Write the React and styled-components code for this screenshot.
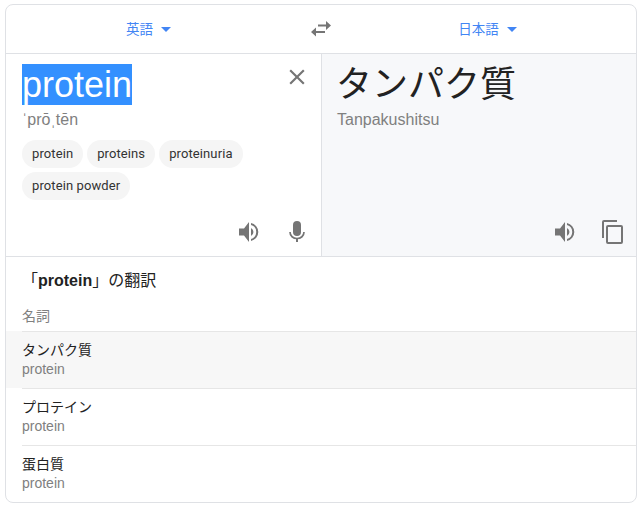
import React from 'react';
import styled, { createGlobalStyle } from 'styled-components';

const GlobalStyle = createGlobalStyle`
  html, body {
    margin: 0;
    padding: 0;
    background: #fff;
    font-family: "Liberation Sans", "Noto Sans CJK JP", sans-serif;
  }
`;

const Card = styled.div`
  box-sizing: border-box;
  width: 632px;
  height: 499px;
  margin: 4px 0 0 5px;
  border: 1px solid #dfe1e5;
  border-radius: 8px;
  overflow: hidden;
  color: #222;
`;

const Toolbar = styled.div`
  display: grid;
  grid-template-columns: 285px 60px 273px;
  align-items: center;
  height: 48px;
  border-bottom: 1px solid #dfe1e5;
`;

const LangButton = styled.div`
  display: flex;
  align-items: center;
  justify-content: center;
  gap: 8px;
  padding-bottom: 2px;
  font-size: 13.5px;
  color: #4285f4;
`;

const Caret = styled.span`
  width: 0;
  height: 0;
  margin-top: 3px;
  border-left: 5px solid transparent;
  border-right: 5px solid transparent;
  border-top: 5px solid #4285f4;
`;

const SwapButton = styled.div`
  display: flex;
  justify-content: center;
  color: #757575;
`;

const Panels = styled.div`
  display: grid;
  grid-template-columns: 315px 1fr;
  height: 202px;
  border-bottom: 1px solid #dfe1e5;
`;

const Panel = styled.div`
  position: relative;
  display: flex;
  flex-direction: column;
  padding: 10px 16px 0 ${props => props.$shaded ? '15px' : '16px'};
  background: ${props => props.$shaded ? '#f7f8fa' : '#fff'};
  border-left: ${props => props.$shaded ? '1px solid #dfe1e5' : 'none'};
`;

const BigText = styled.div`
  font-size: 36px;
  line-height: 42px;
  margin-left: ${props => props.$nudge ? '-1px' : '0'};
`;

const Selected = styled.span`
  background: #3390ff;
  color: #fff;
`;

const Reading = styled.div`
  margin-top: 2px;
  font-size: 16px;
  line-height: 24px;
  color: #808080;
`;

const Chips = styled.div`
  display: flex;
  flex-wrap: wrap;
  gap: 4px;
  margin-top: 8px;
  width: 240px;
`;

const Chip = styled.span`
  height: 28px;
  padding: 0 10px;
  border-radius: 14px;
  background: #f5f5f5;
  font-family: Roboto, "Liberation Sans", sans-serif;
  font-size: 13px;
  line-height: 28px;
  letter-spacing: 0.1px;
  color: #333;
`;

const CloseButton = styled.div`
  position: absolute;
  top: 10px;
  right: 11px;
  display: flex;
  color: #757575;
`;

const Actions = styled.div`
  display: flex;
  justify-content: flex-end;
  gap: 24px;
  margin-top: auto;
  margin-right: ${props => props.$offset}px;
  padding-bottom: 12px;
  color: #757575;
`;

const Results = styled.div`
  display: flex;
  flex-direction: column;
`;

const ResultTitle = styled.div`
  padding: 15px 16px 0;
  font-size: 16px;
  line-height: 18px;
  color: #222;
`;

const PartOfSpeech = styled.div`
  padding: 16px 16px 0;
  font-size: 14px;
  line-height: 20px;
  height: 25px;
  color: #808080;
`;

const Row = styled.div`
  background: ${props => props.$active ? '#f7f7f7' : 'transparent'};
  height: 57px;
  box-sizing: border-box;
`;

const RowInner = styled.div`
  margin-left: 16px;
  padding-top: 8px;
  border-top: 1px solid #e6e6e6;
  height: 100%;
  box-sizing: border-box;
`;

const RowMain = styled.div`
  font-size: 14px;
  line-height: 20px;
  color: #222;
`;

const RowSub = styled.div`
  margin-top: -1px;
  font-size: 14px;
  line-height: 20px;
  color: #808080;
`;

const Svg = styled.svg`
  display: block;
  overflow: visible;
  fill: currentColor;
`;

const SpeakerIcon = () => (
  <Svg width="24" height="24" viewBox="0 0 24 24">
    <path d="M2 8.5h5L12 2v20l-5-6.5H2z" />
    <path d="M14 8a4.5 4.5 0 0 1 0 8z" />
    <path d="M14 3a9.2 9.2 0 0 1 0 18v-2a7.3 7.3 0 0 0 0-14z" />
  </Svg>
);

const MicIcon = () => (
  <Svg width="24" height="24" viewBox="0 0 24 24">
    <path d="M12 16a4 4 0 0 0 4-4V5a4 4 0 0 0-8 0v7a4 4 0 0 0 4 4z" />
    <path d="M5 12c0 4 3.2 6.5 7 6.5s7-2.5 7-6.5" fill="none" stroke="currentColor" strokeWidth="1.7" />
    <path d="M11 18h2v4h-2z" />
  </Svg>
);

const CopyIcon = () => (
  <Svg width="24" height="24" viewBox="0 0 24 24">
    <path d="M3 0h13v2H3v16H1V2a2 2 0 0 1 2-2z" />
    <rect x="6" y="6" width="15" height="17" rx="1" fill="none" stroke="currentColor" strokeWidth="2" />
  </Svg>
);

const CloseIcon = () => (
  <Svg width="26" height="26" viewBox="0 0 24 24">
    <path d="M19 6.41 17.59 5 12 10.59 6.41 5 5 6.41 10.59 12 5 17.59 6.41 19 12 13.41 17.59 19 19 17.59 13.41 12z" />
  </Svg>
);

const SwapIcon = () => (
  <Svg width="24" height="24" viewBox="0 0 24 24">
    <path d="M17 4l5 4.5-5 4.5V9.5H9v-2h8z" />
    <path d="M7 10.5L2 15l5 4.5V16h9v-2H7z" />
  </Svg>
);

const translations = ['タンパク質', 'プロテイン', '蛋白質'];
const suggestions = ['protein', 'proteins', 'proteinuria', 'protein powder'];

export default function App() {
  return (
    <>
      <GlobalStyle />
      <Card>
        <Toolbar>
          <LangButton>英語<Caret /></LangButton>
          <SwapButton><SwapIcon /></SwapButton>
          <LangButton>日本語<Caret /></LangButton>
        </Toolbar>
        <Panels>
          <Panel>
            <BigText><Selected>protein</Selected></BigText>
            <Reading>ˈprōˌtēn</Reading>
            <Chips>
              {suggestions.map(s => <Chip key={s}>{s}</Chip>)}
            </Chips>
            <CloseButton><CloseIcon /></CloseButton>
            <Actions $offset={-4}>
              <SpeakerIcon />
              <MicIcon />
            </Actions>
          </Panel>
          <Panel $shaded>
            <BigText $nudge>タンパク質</BigText>
            <Reading>Tanpakushitsu</Reading>
            <Actions $offset={-5}>
              <SpeakerIcon />
              <CopyIcon />
            </Actions>
          </Panel>
        </Panels>
        <Results>
          <ResultTitle>「<b>protein</b>」の翻訳</ResultTitle>
          <PartOfSpeech>名詞</PartOfSpeech>
          {translations.map((t, i) => (
            <Row key={t} $active={i === 0}>
              <RowInner>
                <RowMain>{t}</RowMain>
                <RowSub>protein</RowSub>
              </RowInner>
            </Row>
          ))}
        </Results>
      </Card>
    </>
  );
}
